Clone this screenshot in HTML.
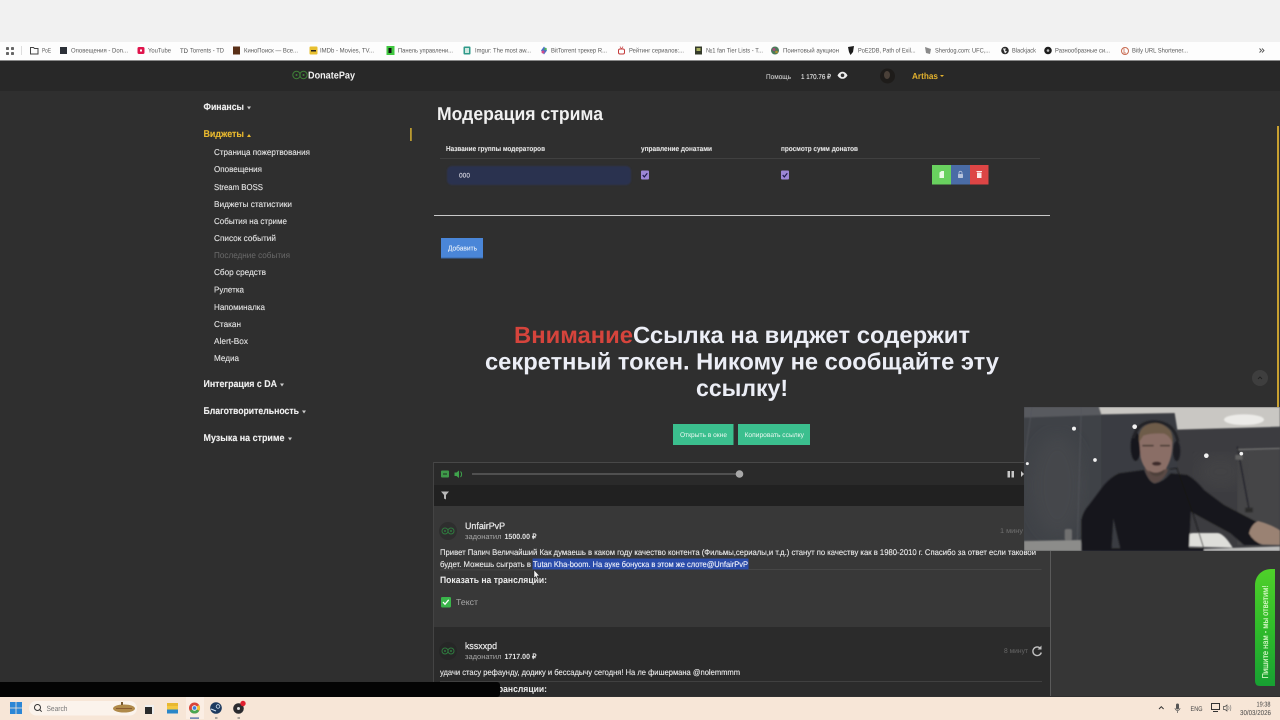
<!DOCTYPE html>
<html><head><meta charset="utf-8"><title>DonatePay</title>
<style>
html,body{margin:0;padding:0;width:1280px;height:720px;overflow:hidden;background:#2f2f2f}
svg{display:block;position:absolute;left:0;top:0;filter:blur(.3px)}
text{font-family:"Liberation Sans","Noto Sans CJK SC",sans-serif;white-space:pre}
.bm text{font-size:6.5px;fill:#5a5a5a}
.grp{font-size:9.8px;font-weight:700;fill:#f0f0f0;stroke:#f0f0f0;stroke-width:.12}
.it{font-size:8.5px;fill:#e2e2e2;stroke:#e2e2e2;stroke-width:.12}
.th{font-size:7.2px;font-weight:700;fill:#e4e4e4;stroke:#e4e4e4;stroke-width:.08}
.big{font-size:23.5px;font-weight:700;fill:#eceef6}
.msg{font-size:8.2px;fill:#eaeaea;stroke:#eaeaea;stroke-width:.12}
</style></head><body>
<svg width="1280" height="720" viewBox="0 0 1280 720" xmlns="http://www.w3.org/2000/svg" text-rendering="geometricPrecision">
<defs>
<filter id="b1"><feGaussianBlur stdDeviation="0.8"/></filter>
<filter id="b3"><feGaussianBlur stdDeviation="2.2"/></filter>
<filter id="b9"><feGaussianBlur stdDeviation="22"/></filter>
<linearGradient id="gr" x1="0" y1="0" x2="0" y2="1"><stop offset="0" stop-color="#4fd02a"/><stop offset="0.5" stop-color="#30bb2a"/><stop offset="1" stop-color="#17a032"/></linearGradient>
<clipPath id="cam"><rect x="0" y="6" width="768" height="432"/></clipPath>
</defs>

<!-- page -->
<rect width="1280" height="720" fill="#2f2f2f"/>
<rect x="0" y="0" width="1280" height="42" fill="#f1f1f1"/>
<rect x="0" y="42" width="1280" height="18" fill="#fdfdfd"/>
<rect x="0" y="60" width="1280" height="1" fill="#8a8a8a"/>
<rect x="0" y="61" width="1280" height="30" fill="#282828"/>

<!-- bookmarks bar -->
<g class="bm">
<g fill="#666"><rect x="6" y="47" width="3" height="3" rx=".8"/><rect x="11" y="47" width="3" height="3" rx=".8"/><rect x="6" y="52" width="3" height="3" rx=".8"/><rect x="11" y="52" width="3" height="3" rx=".8"/></g>
<rect x="21" y="46" width="1" height="9" fill="#ddd"/>
<path d="M30.500 47.500h3l1 1h3.500v5.500h-7.500z" fill="none" stroke="#444" stroke-width="1"/>
<text x="42" y="52.500" textLength="9" lengthAdjust="spacingAndGlyphs">PoE</text>
<rect x="60" y="47" width="7" height="7" fill="#2c3038"/>
<text x="71" y="52.500" textLength="57" lengthAdjust="spacingAndGlyphs">Оповещения - Don...</text>
<rect x="137.500" y="47" width="7" height="7" rx="1.500" fill="#e0144c"/><rect x="140" y="49.500" width="2" height="2" fill="#fff"/>
<text x="148" y="52.500" textLength="23" lengthAdjust="spacingAndGlyphs">YouTube</text>
<text x="180" y="53" textLength="8" lengthAdjust="spacingAndGlyphs" style="font-size:6.500px;fill:#444">TD</text>
<text x="190" y="52.500" textLength="34" lengthAdjust="spacingAndGlyphs">Torrents - TD</text>
<rect x="233" y="46.500" width="7" height="8" fill="#5a3018"/>
<text x="244" y="52.500" textLength="54" lengthAdjust="spacingAndGlyphs">КиноПоиск — Все...</text>
<rect x="309.500" y="46.500" width="8" height="8" rx="1" fill="#e8c030"/><rect x="311" y="50" width="5" height="1.500" fill="#222"/>
<text x="320" y="52.500" textLength="54" lengthAdjust="spacingAndGlyphs">IMDb - Movies, TV...</text>
<rect x="386.500" y="46" width="8" height="9" fill="#40c840"/><rect x="388.500" y="48" width="3" height="5" fill="#111"/>
<text x="398" y="52.500" textLength="55" lengthAdjust="spacingAndGlyphs">Панель управлени...</text>
<rect x="463.500" y="46.500" width="7" height="8" rx="1" fill="#2f9a8a"/><rect x="465" y="48" width="4" height="5" fill="#cfe8e0"/>
<text x="475" y="52.500" textLength="56" lengthAdjust="spacingAndGlyphs">Imgur: The most aw...</text>
<path d="M544 46.500l3 4-3 4-3-4z" fill="#4a6fc8"/><circle cx="543" cy="52" r="1.500" fill="#d04a8a"/><circle cx="545.500" cy="49" r="1.300" fill="#50b060"/>
<text x="551" y="52.500" textLength="56" lengthAdjust="spacingAndGlyphs">BitTorrent трекер R...</text>
<rect x="618.500" y="49" width="6" height="5" rx="1.500" fill="none" stroke="#c43a3a" stroke-width="1"/><path d="M620 46.500l1.500 2.500 1.500-2.500" fill="none" stroke="#c43a3a" stroke-width=".7"/>
<text x="629" y="52.500" textLength="55" lengthAdjust="spacingAndGlyphs">Рейтинг сериалов:...</text>
<rect x="695" y="46.500" width="7" height="8" fill="#343a2a"/><rect x="696.500" y="48" width="4" height="3" fill="#a8b060"/>
<text x="706" y="52.500" textLength="57" lengthAdjust="spacingAndGlyphs">№1 fan Tier Lists - T...</text>
<circle cx="775" cy="50.500" r="4" fill="#4a7a5a"/><circle cx="774" cy="49.500" r="1.500" fill="#a84a7a"/><circle cx="776.500" cy="52" r="1.300" fill="#b09030"/>
<text x="783" y="52.500" textLength="56" lengthAdjust="spacingAndGlyphs">Поинтовый аукцион</text>
<path d="M848 47l6-1-1 6-2.500 3-1.500-3z" fill="#1c1c1c"/>
<text x="858" y="52.500" textLength="57.500" lengthAdjust="spacingAndGlyphs">PoE2DB, Path of Exil...</text>
<path d="M925 47l6 2-1 5-4-1z" fill="#8a8a8a"/>
<text x="935" y="52.500" textLength="55" lengthAdjust="spacingAndGlyphs">Sherdog.com: UFC,...</text>
<circle cx="1005" cy="50.500" r="3.800" fill="#2a2a2a"/><path d="M1003 48.500h3l-1 2 2 1-2 2z" fill="#eee"/>
<text x="1012" y="52.500" textLength="24" lengthAdjust="spacingAndGlyphs">Blackjack</text>
<circle cx="1048" cy="50.500" r="3.800" fill="#1c1c1c"/><circle cx="1048" cy="50.500" r="1.300" fill="#bbb"/>
<text x="1055" y="52.500" textLength="55" lengthAdjust="spacingAndGlyphs">Разнообразные си...</text>
<circle cx="1125" cy="51" r="3.500" fill="none" stroke="#c86a50" stroke-width="1"/><path d="M1124 48.500v4.500h2" fill="none" stroke="#c86a50" stroke-width=".8"/>
<text x="1132" y="52.500" textLength="56" lengthAdjust="spacingAndGlyphs">Bitly URL Shortener...</text>
<path d="M1259.500 48.500l2 2-2 2M1262 48.500l2 2-2 2" fill="none" stroke="#555" stroke-width=".9"/>
</g>

<!-- header -->
<g fill="none" stroke="#3f8038" stroke-width="1"><circle cx="296.500" cy="75" r="3.700"/><circle cx="303.500" cy="75" r="3.700"/></g>
<circle cx="296.500" cy="75" r="1" fill="#3f8038"/><circle cx="303.500" cy="75" r="1" fill="#3f8038"/>
<text x="308" y="78.500" textLength="47" lengthAdjust="spacingAndGlyphs" style="font-size:10px;font-weight:700;fill:#f2f2f2">DonatePay</text>
<text x="766" y="79" textLength="25" lengthAdjust="spacingAndGlyphs" style="font-size:7px;fill:#e0e0e0">Помощь</text>
<text x="801" y="79" textLength="30" lengthAdjust="spacingAndGlyphs" style="font-size:7px;fill:#e6e6e6;stroke:#e6e6e6;stroke-width:.12">1 170.76 ₽</text>
<path d="M837.500 75.500c1.500-2.700 3-3.700 5-3.700s3.500 1 5 3.700c-1.500 2.300-3 3.300-5 3.300s-3.500-1-5-3.300z" fill="#f0f0f0"/><circle cx="842.500" cy="75.300" r="1.800" fill="#333"/>
<circle cx="887.500" cy="76" r="7.500" fill="#1e1c1a"/><ellipse cx="887" cy="75" rx="3" ry="4" fill="#4a4038"/>
<text x="912" y="79" textLength="26" lengthAdjust="spacingAndGlyphs" style="font-size:8.800px;font-weight:700;fill:#e3b22e">Arthas</text>
<path d="M940 75h4l-2 2z" fill="#e3b22e"/>

<!-- sidebar -->
<text class="grp" x="203.500" y="110" textLength="40.500" lengthAdjust="spacingAndGlyphs">Финансы</text><path d="M247 106.500h4l-2 3z" fill="#ccc"/>
<text class="grp" x="203.500" y="137" textLength="40.500" lengthAdjust="spacingAndGlyphs" style="fill:#e9b92f;stroke:#e9b92f">Виджеты</text><path d="M247 137h4l-2-3z" fill="#e9b92f"/>
<rect x="410" y="128" width="1.800" height="13" fill="#b99a30"/>
<text class="it" x="214" y="155" textLength="96" lengthAdjust="spacingAndGlyphs">Страница пожертвования</text>
<text class="it" x="214" y="172" textLength="48" lengthAdjust="spacingAndGlyphs">Оповещения</text>
<text class="it" x="214" y="190" textLength="49" lengthAdjust="spacingAndGlyphs">Stream BOSS</text>
<text class="it" x="214" y="207" textLength="78" lengthAdjust="spacingAndGlyphs">Виджеты статистики</text>
<text class="it" x="214" y="224" textLength="73" lengthAdjust="spacingAndGlyphs">События на стриме</text>
<text class="it" x="214" y="241" textLength="62" lengthAdjust="spacingAndGlyphs">Список событий</text>
<text class="it" x="214" y="258" textLength="76" lengthAdjust="spacingAndGlyphs" style="fill:#6a6a6a;stroke:none">Последние события</text>
<text class="it" x="214" y="275" textLength="52" lengthAdjust="spacingAndGlyphs">Сбор средств</text>
<text class="it" x="214" y="292.500" textLength="30" lengthAdjust="spacingAndGlyphs">Рулетка</text>
<text class="it" x="214" y="310" textLength="51" lengthAdjust="spacingAndGlyphs">Напоминалка</text>
<text class="it" x="214" y="327" textLength="27" lengthAdjust="spacingAndGlyphs">Стакан</text>
<text class="it" x="214" y="344" textLength="34" lengthAdjust="spacingAndGlyphs">Alert-Box</text>
<text class="it" x="214" y="361" textLength="25" lengthAdjust="spacingAndGlyphs">Медиа</text>
<text class="grp" x="203.500" y="387" textLength="73.500" lengthAdjust="spacingAndGlyphs">Интеграция с DA</text><path d="M280 383.500h4l-2 3z" fill="#ccc"/>
<text class="grp" x="203.500" y="414" textLength="95.500" lengthAdjust="spacingAndGlyphs">Благотворительность</text><path d="M302 410.500h4l-2 3z" fill="#ccc"/>
<text class="grp" x="203.500" y="441" textLength="81" lengthAdjust="spacingAndGlyphs">Музыка на стриме</text><path d="M288 437.500h4l-2 3z" fill="#ccc"/>

<!-- moderation -->
<text x="437" y="120" textLength="166" lengthAdjust="spacingAndGlyphs" style="font-size:18.500px;font-weight:700;fill:#f0f0f0">Модерация стрима</text>
<text class="th" x="446" y="151" textLength="99" lengthAdjust="spacingAndGlyphs">Название группы модераторов</text>
<text class="th" x="641" y="151" textLength="71" lengthAdjust="spacingAndGlyphs">управление донатами</text>
<text class="th" x="781" y="151" textLength="77" lengthAdjust="spacingAndGlyphs">просмотр сумм донатов</text>
<rect x="440" y="158" width="600" height=".8" fill="#444"/>
<rect x="447" y="166" width="184" height="19" rx="5" fill="#2c3050" filter="url(#b1)"/>
<text x="459" y="177.500" textLength="11" lengthAdjust="spacingAndGlyphs" style="font-size:8.500px;fill:#d0d0dc;stroke:#d0d0dc;stroke-width:.15">ооо</text>
<rect x="641" y="170.500" width="8" height="9" rx="1" fill="#9c86d6"/><path d="M642.700 175l1.600 1.900 3-3.600" fill="none" stroke="#1e1a50" stroke-width="1.200"/>
<rect x="781" y="170.500" width="8" height="9" rx="1" fill="#9c86d6"/><path d="M782.700 175l1.600 1.900 3-3.600" fill="none" stroke="#1e1a50" stroke-width="1.200"/>
<rect x="932" y="165" width="19" height="19.500" fill="#69d15f"/>
<rect x="951" y="165" width="19" height="19.500" fill="#4a6ca6"/>
<rect x="970" y="165" width="18.500" height="19.500" fill="#dd4545"/>
<path d="M939.500 172.500l2-1.500h2.500v7h-4.500z" fill="#eafae6"/>
<rect x="958" y="174" width="5" height="4" rx=".6" fill="#b8c4dc"/><path d="M959 174v-1.200a1.500 1.500 0 013 0v1.200" fill="none" stroke="#b8c4dc" stroke-width=".8"/>
<rect x="977" y="172.500" width="4.500" height="5.500" fill="#fbe8e8"/><rect x="976.500" y="171" width="5.500" height="1" fill="#fbe8e8"/>
<rect x="434" y="215" width="616" height="1" fill="#c8c8c8"/>
<rect x="441" y="238" width="42" height="20" fill="#4a86d8"/>
<rect x="441" y="257.500" width="42" height="1" fill="#3a68a8"/>
<text x="448" y="250.500" textLength="29" lengthAdjust="spacingAndGlyphs" style="font-size:7.200px;fill:#e6effa;stroke:#e6effa;stroke-width:.1">Добавить</text>

<!-- warning -->
<text class="big" x="514" y="343" textLength="119" lengthAdjust="spacingAndGlyphs" style="fill:#d6443c">Внимание</text>
<text class="big" x="633" y="343" textLength="337" lengthAdjust="spacingAndGlyphs">Ссылка на виджет содержит</text>
<text class="big" x="485" y="369.500" textLength="514" lengthAdjust="spacingAndGlyphs">секретный токен. Никому не сообщайте эту</text>
<text class="big" x="696" y="396" textLength="92" lengthAdjust="spacingAndGlyphs">ссылку!</text>
<rect x="673" y="424" width="60.500" height="21" fill="#3bbf8e"/>
<rect x="738" y="424" width="72" height="21" fill="#3bbf8e"/>
<text x="680" y="437" textLength="47" lengthAdjust="spacingAndGlyphs" style="font-size:6.800px;fill:#e8f8f0">Открыть в окне</text>
<text x="744.500" y="437" textLength="59.500" lengthAdjust="spacingAndGlyphs" style="font-size:6.800px;fill:#e8f8f0">Копировать ссылку</text>

<!-- event panel -->
<rect x="433" y="462" width="618" height="234" fill="#2c2c2c"/>
<rect x="433" y="462" width="618" height="1" fill="#484848"/>
<rect x="433" y="463" width="617" height="22" fill="#2a2a2a"/>
<rect x="433" y="485" width="617" height="21" fill="#212121"/>
<rect x="433" y="506" width="617" height="121" fill="#383838"/>
<rect x="433" y="627" width="617" height="69" fill="#2b2b2b"/>
<rect x="1050" y="462" width="1" height="234" fill="#5a5a5a"/>
<rect x="433" y="462" width="1" height="234" fill="#444"/>
<rect x="441" y="470.500" width="8" height="7" rx="1" fill="#3f9a4a"/><rect x="443" y="473.500" width="4" height="1" fill="#1e2e20"/>
<path d="M454.500 472.500h2l2.500-2v7.500l-2.500-2h-2z" fill="#3fa34c"/><path d="M460.500 471.500c1.500 1.500 1.500 4 0 5.500" fill="none" stroke="#3fa34c" stroke-width="1"/>
<rect x="472" y="473" width="268" height="2" fill="#505050"/>
<circle cx="739.500" cy="474" r="3.800" fill="#a8a8a8"/>
<rect x="1007.500" y="471" width="2.500" height="6.500" fill="#c8c8c8"/><rect x="1011.500" y="471" width="2.500" height="6.500" fill="#c8c8c8"/>
<path d="M1021 471l3 3-3 3z" fill="#c8c8c8"/>
<path d="M441 491.500h8l-3 3.500v4.500l-2-1v-3.500z" fill="#b8b8b8"/>

<!-- item 1 -->
<circle cx="448" cy="531" r="9" fill="#2e2e2e"/>
<g fill="none" stroke="#2f7a3e" stroke-width="1"><circle cx="445" cy="531" r="3"/><circle cx="451" cy="531" r="3"/></g>
<circle cx="445" cy="531" r="1" fill="#2f7a3e"/><circle cx="451" cy="531" r="1" fill="#2f7a3e"/>
<text x="465" y="529" textLength="40" lengthAdjust="spacingAndGlyphs" style="font-size:9.300px;fill:#e6e6e6;stroke:#e6e6e6;stroke-width:.25">UnfairPvP</text>
<text x="465" y="539" textLength="36.500" lengthAdjust="spacingAndGlyphs" style="font-size:7.500px;fill:#a8a8a8">задонатил</text>
<text x="504.500" y="539" textLength="32" lengthAdjust="spacingAndGlyphs" style="font-size:7.500px;font-weight:700;fill:#e0e0e0">1500.00 ₽</text>
<text x="1000" y="533" textLength="23" lengthAdjust="spacingAndGlyphs" style="font-size:7px;fill:#707070">1 мину</text>
<text class="msg" x="440" y="555" textLength="596" lengthAdjust="spacingAndGlyphs">Привет Папич Величайший Как думаешь в каком году качество контента (Фильмы,сериалы,и т.д.) станут по качеству как в 1980-2010 г. Спасибо за ответ если таковой</text>
<text class="msg" x="440" y="567" textLength="91" lengthAdjust="spacingAndGlyphs">будет. Можешь сыграть в</text>
<rect x="532.500" y="558.500" width="216" height="11" fill="#2a4caa"/>
<text class="msg" x="533" y="567" textLength="215" lengthAdjust="spacingAndGlyphs" style="fill:#f0f2fa;stroke:#f0f2fa">Tutan Kha-boom. На ауке бонуска в этом же слоте@UnfairPvP</text>
<rect x="748.500" y="569" width="293" height=".8" fill="#4a4a4a"/><rect x="440" y="569.500" width="93" height=".8" fill="#4a4a4a"/>
<text x="440" y="583" textLength="107" lengthAdjust="spacingAndGlyphs" style="font-size:9.300px;font-weight:700;fill:#ededed">Показать на трансляции:</text>
<rect x="441" y="597" width="10" height="10.500" rx="1.200" fill="#39b54a"/><path d="M443 602l2 2.300 3.700-4.500" fill="none" stroke="#fff" stroke-width="1.300"/>
<text x="456" y="605" textLength="22" lengthAdjust="spacingAndGlyphs" style="font-size:8.500px;fill:#a8a8a8">Текст</text>
<path d="M534 570v8l1.800-1.600 1.300 3 1.200-.5-1.300-3h2.500z" fill="#f2f2f2" stroke="#111" stroke-width=".4"/>

<!-- item 2 -->
<circle cx="448" cy="651" r="9" fill="#262626"/>
<g fill="none" stroke="#2f7a3e" stroke-width="1"><circle cx="445" cy="651" r="3"/><circle cx="451" cy="651" r="3"/></g>
<circle cx="445" cy="651" r="1" fill="#2f7a3e"/><circle cx="451" cy="651" r="1" fill="#2f7a3e"/>
<text x="465" y="649" textLength="32" lengthAdjust="spacingAndGlyphs" style="font-size:9.300px;fill:#e6e6e6;stroke:#e6e6e6;stroke-width:.25">kssxxpd</text>
<text x="465" y="659" textLength="36.500" lengthAdjust="spacingAndGlyphs" style="font-size:7.500px;fill:#a8a8a8">задонатил</text>
<text x="504.500" y="659" textLength="32" lengthAdjust="spacingAndGlyphs" style="font-size:7.500px;font-weight:700;fill:#e0e0e0">1717.00 ₽</text>
<text x="1004" y="653" textLength="24" lengthAdjust="spacingAndGlyphs" style="font-size:7px;fill:#666">8 минут</text>
<path d="M1040.500 648.500a4.300 4.300 0 10.800 4" fill="none" stroke="#c0c0c0" stroke-width="1.400"/><path d="M1041.500 645.500v4h-4z" fill="#c0c0c0"/>
<text class="msg" x="440" y="675" textLength="300" lengthAdjust="spacingAndGlyphs">удачи стасу рефаунду, додику и бессадычу сегодня! На ле фишермана @nolemmmm</text>
<rect x="440" y="681" width="602" height=".8" fill="#454545"/>
<text x="440" y="692" textLength="107" lengthAdjust="spacingAndGlyphs" style="font-size:9.300px;font-weight:700;fill:#ededed">Показать на трансляции:</text>
<rect x="-6" y="682" width="506" height="15" rx="3" fill="#040404"/>

<!-- right side -->
<rect x="1051" y="551" width="229" height="145" fill="#363636"/>
<circle cx="1260" cy="378" r="8" fill="#3e3e3e"/><path d="M1258 379l2-2 2 2" fill="none" stroke="#222" stroke-width="1"/>
<rect x="1277" y="126" width="2" height="281" fill="#c8a030"/>
<path d="M1275 569h-4c-9 0-16 7-16 16v96q0 5 5 5h15z" fill="url(#gr)"/>
<text transform="translate(1268,678.500) rotate(-90)" textLength="93" lengthAdjust="spacingAndGlyphs" style="font-size:8.500px;fill:#d8f8c8;stroke:#d8f8c8;stroke-width:.15">Пишите нам - мы ответим!</text>

<!-- webcam: local coords are 3x -->
<g transform="translate(1024,405) scale(.33333)">
<g clip-path="url(#cam)">
<rect x="0" y="6" width="768" height="432" fill="#3e3f44"/>
<rect x="0" y="6" width="232" height="432" fill="#3f4247"/>
<rect x="232" y="28" width="228" height="410" fill="#3a3c42"/>
<rect x="460" y="70" width="308" height="368" fill="#3c3c40"/>
<rect x="640" y="130" width="128" height="290" fill="#454547" filter="url(#b3)"/>
<ellipse cx="590" cy="200" rx="70" ry="50" fill="#424245" filter="url(#b9)"/>
<ellipse cx="100" cy="240" rx="80" ry="150" fill="#44474c" filter="url(#b9)"/>
<g filter="url(#b3)">
<path d="M0 6H225L232 30L0 38z" fill="#585a5e"/>
<path d="M225 6H768V65L460 74L452 24L232 28z" fill="#c9c7c3"/>
<path d="M172 6l-12 400M24 6L0 170" stroke="#55575d" stroke-width="2" fill="none"/>
<ellipse cx="660" cy="44" rx="60" ry="16" fill="#ecebe8"/>
<path d="M0 408L170 405L178 438H0z" fill="#8c8c8a"/>
<rect x="122" y="372" width="22" height="34" rx="6" fill="#6f7070"/>
<path d="M640 134L768 130" stroke="#7d7d7d" stroke-width="3"/>
<path d="M640 125L675 312" stroke="#1f1f21" stroke-width="3" fill="none"/>
<rect x="634" y="150" width="22" height="14" fill="#606060"/>
<rect x="664" y="308" width="22" height="14" fill="#2a2a2c"/>
<!-- chair -->
<path d="M495 425L493 392Q495 384 510 384H580Q600 385 626 428z" fill="#dededa"/>
<!-- desk right -->
<path d="M535 432L768 424V438H535z" fill="#bdbdbc"/>
<!-- sweater -->
<path d="M172 438V345Q178 318 195 300L240 240Q262 215 285 205L360 195Q375 232 392 236Q420 230 440 205L490 210Q516 225 540 255L600 300L700 352L680 395L712 420L660 420L620 385L500 320L495 432L290 434L268 340L262 436z" fill="#17171a"/>
<rect x="180" y="430" width="360" height="8" fill="#17181b"/>
<!-- arm -->
<path d="M675 385Q680 360 702 348Q740 358 768 376V420L716 419Q688 410 675 385z" fill="#9a8273"/>
<!-- neck -->
<path d="M362 190L380 180H420L432 195Q420 228 392 234Q372 228 362 190z" fill="#5a4a44"/>
<!-- headphones -->
<ellipse cx="335" cy="125" rx="15" ry="43" fill="#17171b"/>
<ellipse cx="458" cy="138" rx="11" ry="30" fill="#1c1c20"/>
<path d="M328 100Q340 50 392 50Q450 52 462 110" fill="none" stroke="#232326" stroke-width="9"/>
<!-- face -->
<path d="M346 110Q346 70 392 68Q442 70 445 112Q446 160 425 192Q405 212 385 208Q358 192 350 158z" fill="#8a6e66"/>
<path d="M345 112Q340 70 372 58Q410 44 440 78Q448 96 446 116Q438 92 420 86Q378 84 358 92z" fill="#6e5b48"/>
<ellipse cx="398" cy="176" rx="14" ry="6" fill="#3e2c2a"/>
<path d="M355 122h34M408 122h30" stroke="#4a3a36" stroke-width="5"/>
<path d="M372 195Q398 212 422 192L418 205Q398 220 382 208z" fill="#4e3f3a"/>
<path d="M460 190L438 192M458 188L505 320L540 432" stroke="#141416" stroke-width="2.500" fill="none"/>
</g>
<g fill="#f2f2f2" filter="url(#b1)"><circle cx="150" cy="71" r="6"/><circle cx="332" cy="65" r="7"/><circle cx="213" cy="165" r="5.500"/><circle cx="547" cy="152" r="7"/><circle cx="10" cy="176" r="4.500"/><circle cx="652" cy="146" r="5.500"/></g>
</g>
</g>

<!-- taskbar -->
<rect x="0" y="697" width="1280" height="23" fill="#f7e6d7"/>
<g fill="#2b86d6"><rect x="10" y="702" width="5.600" height="5.600"/><rect x="16.400" y="702" width="5.600" height="5.600"/><rect x="10" y="708.400" width="5.600" height="5.600"/><rect x="16.400" y="708.400" width="5.600" height="5.600"/></g>
<rect x="29" y="701" width="108" height="14.500" rx="7.200" fill="#fbf3ec"/>
<circle cx="37.500" cy="707.500" r="3" fill="none" stroke="#333" stroke-width="1"/><path d="M39.700 709.700l2 2" stroke="#333" stroke-width="1"/>
<text x="46.500" y="711" textLength="21" lengthAdjust="spacingAndGlyphs" style="font-size:7.500px;fill:#777">Search</text>
<ellipse cx="124" cy="708.500" rx="11" ry="4" fill="#b08a4a"/><path d="M121 705v-3h2v3z" fill="#7a5a30"/><rect x="116" y="708" width="16" height="1" fill="#8a5a30"/>
<rect x="145" y="705" width="9" height="9" fill="#eee"/><rect x="145" y="707" width="7" height="7" fill="#2a2a2a"/>
<rect x="167" y="703" width="11" height="3" fill="#e8b830"/><rect x="167" y="706" width="11" height="4" fill="#f4c840"/><rect x="167" y="709.500" width="11" height="4" fill="#2a86c8"/>
<rect x="186" y="697" width="18" height="22" fill="#fbeee4"/>
<circle cx="194.500" cy="708" r="5.500" fill="#d8453a"/><path d="M194.500 708l-4.800 2.700a5.500 5.500 0 004.800 2.800 5.500 5.500 0 004.800-2.800z" fill="#4aa650"/><path d="M194.500 708l4.800 2.700a5.500 5.500 0 00-.2-5.700z" fill="#f2c233"/><circle cx="194.500" cy="708" r="2.300" fill="#3e7fd8" stroke="#fff" stroke-width=".8"/>
<rect x="190" y="717.500" width="9" height="1.200" fill="#3f5f9f"/>
<circle cx="216" cy="708" r="5.800" fill="#1d3a5f"/><circle cx="218" cy="706.500" r="1.800" fill="none" stroke="#cfe0f0" stroke-width=".8"/><path d="M211 709l5 2" stroke="#cfe0f0" stroke-width="1.200"/>
<rect x="215" y="717.500" width="2.500" height="1" fill="#666"/>
<circle cx="238.500" cy="708.500" r="5.300" fill="#2a2a2e"/><circle cx="238.500" cy="708.500" r="1.500" fill="#ddd"/><circle cx="243" cy="703.500" r="2.700" fill="#e02030"/>
<rect x="237.500" y="717.500" width="2.500" height="1" fill="#666"/>
<path d="M1159 709l2.300-2.300 2.300 2.300" fill="none" stroke="#333" stroke-width="1"/>
<rect x="1176" y="703.500" width="3" height="6" rx="1.500" fill="#555"/><path d="M1175 708a2.500 2.500 0 005 0M1177.500 711v2" fill="none" stroke="#555" stroke-width=".7"/>
<text x="1190.500" y="711" textLength="12" lengthAdjust="spacingAndGlyphs" style="font-size:6.800px;fill:#444">ENG</text>
<rect x="1211.500" y="703.500" width="8" height="6" fill="none" stroke="#333" stroke-width="1"/><path d="M1213 711.500h5" stroke="#333" stroke-width="1"/>
<path d="M1223.500 706.500h1.500l2-1.500v6l-2-1.500h-1.500z" fill="none" stroke="#444" stroke-width=".7"/><path d="M1228.500 706c.8 1 .8 3 0 4M1230 705c1.200 1.500 1.200 4.500 0 6" fill="none" stroke="#777" stroke-width=".6"/>
<text x="1256.500" y="706.500" textLength="14" lengthAdjust="spacingAndGlyphs" style="font-size:7px;fill:#444">19:38</text>
<text x="1240" y="715" textLength="31" lengthAdjust="spacingAndGlyphs" style="font-size:7px;fill:#444">30/03/2026</text>
</svg>
</body></html>
